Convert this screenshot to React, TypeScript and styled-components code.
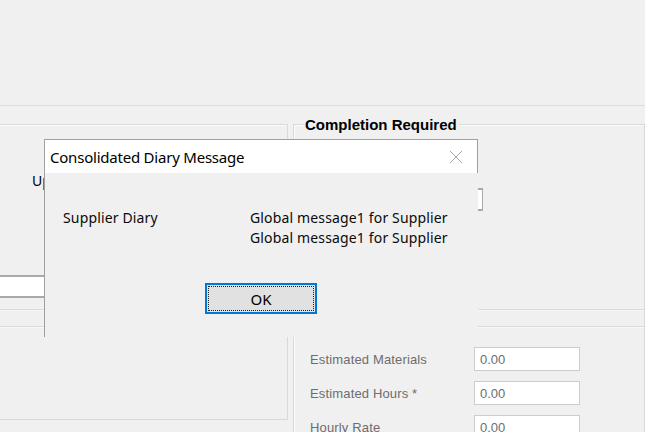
import React from "react";
import styled, { createGlobalStyle } from "styled-components";

const GlobalStyle = createGlobalStyle`
  html, body { margin: 0; padding: 0; background: #f0f0f0; }
  body { width: 645px; height: 432px; overflow: hidden; }
  * { box-sizing: border-box; }
`;

const UI_FONT = `"Noto Sans", "Open Sans", sans-serif`;
const FORM_FONT = `"Liberation Sans", Arial, sans-serif`;

const Screen = styled.div`
  position: relative;
  width: 645px;
  height: 432px;
  overflow: hidden;
  background: #f0f0f0;
  font-family: ${UI_FONT};
`;

const TopBand = styled.div`
  height: 106px;
  border-bottom: 1px solid #dcdcdc;
`;

const Panels = styled.div`
  display: flex;
  gap: 5px;
  margin-top: 18px;
`;

const GroupBox = styled.div<{ $width?: number; $height?: number }>`
  position: relative;
  flex: ${(p) => (p.$width ? `0 0 ${p.$width}px` : "1 1 auto")};
  height: ${(p) => (p.$height ? `${p.$height}px` : "400px")};
  border: 1px solid #d9d9d9;
  box-shadow: inset 1px 1px 0 #fbfbfb;
  display: flex;
  flex-direction: column;
`;

const LeftGroup = styled(GroupBox)`
  margin-left: -10px;
`;

const Legend = styled.span`
  position: absolute;
  top: -9px;
  left: 10px;
  padding: 0 2px 0 1px;
  background: #f0f0f0;
  font-family: ${FORM_FONT};
  font-weight: bold;
  font-size: 15px;
  line-height: 18px;
  color: #000;
`;

const UpLabel = styled.div`
  margin: 46px 0 0 41px;
  font-size: 14px;
  line-height: 20px;
  color: #000;
`;

const SunkenField = styled.div<{ $top: number; $left: number; $width: number }>`
  margin-top: ${(p) => p.$top}px;
  margin-left: ${(p) => p.$left}px;
  width: ${(p) => p.$width}px;
  height: 23px;
  background: #fff;
  border-top: 2px solid #a9a9a9;
  border-bottom: 2px solid #a9a9a9;
  border-right: 1px solid #a9a9a9;
`;

const Rule = styled.div<{ $top: number }>`
  margin-top: ${(p) => p.$top}px;
  height: 2px;
  border-top: 1px solid #dadada;
  border-bottom: 1px solid #f7f7f7;
`;

const FormGrid = styled.div`
  display: grid;
  grid-template-columns: 164px 106px;
  grid-auto-rows: 24px;
  row-gap: 10px;
  margin: 19px 0 0 16px;
`;

const FieldLabel = styled.div`
  display: flex;
  align-items: center;
  font-family: ${FORM_FONT};
  font-size: 13px;
  letter-spacing: 0.15px;
  color: #6d6d6d;
`;

const ValueBox = styled.div`
  display: flex;
  align-items: center;
  padding-left: 5px;
  background: #fff;
  border: 1px solid #cdcdcd;
  font-family: ${FORM_FONT};
  font-size: 13px;
  color: #6d6d6d;
`;

/* dialog overlay */
const Dialog = styled.div`
  position: absolute;
  left: 44px;
  top: 139px;
  width: 434px;
  height: 198px;
  display: flex;
  flex-direction: column;
`;

const TitleBar = styled.div`
  height: 34px;
  flex: 0 0 34px;
  background: #fff;
  border: 1px solid #a0a0a0;
  border-bottom: none;
  display: flex;
  align-items: center;
  justify-content: space-between;
  padding: 0 14px 0 5px;
`;

const Title = styled.span`
  font-size: 15px;
  letter-spacing: -0.22px;
  color: #000;
  line-height: 20px;
`;

const CloseGlyph = styled.svg`
  width: 14px;
  height: 14px;
  display: block;
`;

const DialogBody = styled.div`
  flex: 1;
  background: #f0f0f0;
  border-left: 1px solid #a0a0a0;
  display: flex;
  flex-direction: column;
  padding-top: 35px;
`;

const MessageGrid = styled.div`
  display: grid;
  grid-template-columns: 187px auto;
  padding-left: 18px;
  font-size: 14px;
  line-height: 20px;
  letter-spacing: 0.15px;
  color: #0a0a0a;
`;

const ButtonRow = styled.div`
  display: flex;
  margin-top: 35px;
  padding-left: 160px;
`;

const OkButton = styled.button`
  width: 112px;
  height: 31px;
  padding: 0;
  background: #e1e1e1;
  border: 2px solid #0078d7;
  outline: 1px dotted #222;
  outline-offset: -4px;
  font-family: ${UI_FONT};
  font-size: 15px;
  color: #000;
`;

export default function App() {
  return (
    <>
      <GlobalStyle />
      <Screen>
        <TopBand />
        <Panels>
          <LeftGroup $width={298} $height={296}>
            <UpLabel>Up</UpLabel>
            <SunkenField $top={84} $left={0} $width={260} />
            <Rule $top={11} />
            <Rule $top={15} />
          </LeftGroup>
          <GroupBox>
            <Legend>Completion Required</Legend>
            <SunkenField $top={63} $left={69} $width={120} />
            <Rule $top={98} />
            <Rule $top={15} />
            <FormGrid>
              <FieldLabel>Estimated Materials</FieldLabel>
              <ValueBox>0.00</ValueBox>
              <FieldLabel>Estimated Hours *</FieldLabel>
              <ValueBox>0.00</ValueBox>
              <FieldLabel>Hourly Rate</FieldLabel>
              <ValueBox>0.00</ValueBox>
            </FormGrid>
          </GroupBox>
        </Panels>
        <Dialog>
          <TitleBar>
            <Title>Consolidated Diary Message</Title>
            <CloseGlyph viewBox="0 0 14 14">
              <path d="M1 1 L13 13 M13 1 L1 13" stroke="#a8a8a8" strokeWidth="1" fill="none" />
            </CloseGlyph>
          </TitleBar>
          <DialogBody>
            <MessageGrid>
              <div>Supplier Diary</div>
              <div>
                <div>Global message1 for Supplier</div>
                <div>Global message1 for Supplier</div>
              </div>
            </MessageGrid>
            <ButtonRow>
              <OkButton>OK</OkButton>
            </ButtonRow>
          </DialogBody>
        </Dialog>
      </Screen>
    </>
  );
}
